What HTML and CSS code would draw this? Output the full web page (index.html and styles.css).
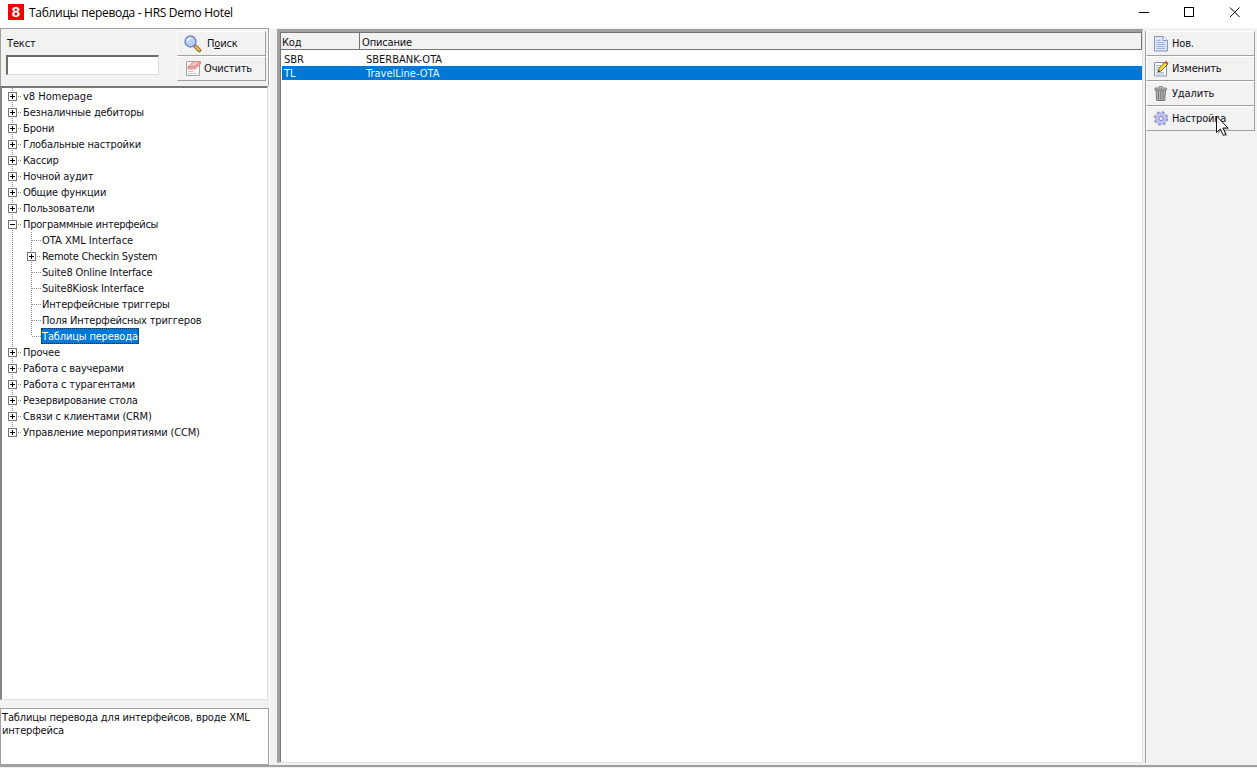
FILE: index.html
```html
<!DOCTYPE html>
<html lang="ru">
<head>
<meta charset="utf-8">
<title>Таблицы перевода - HRS Demo Hotel</title>
<link rel="stylesheet" href="styles.css">
</head>
<body>
<div class="window">
  <header class="titlebar">
    <span class="logo">8</span>
    <span class="title">Таблицы перевода - HRS Demo Hotel</span>
    <svg class="controls" width="112" height="24" viewBox="0 0 112 24" fill="none" stroke="#000" shape-rendering="crispEdges"><path d="M5 12.500h10M50.500 7.500h9v9h-9z"/><path shape-rendering="auto" d="M96 7.500l9.500 9.500M105.500 7.500l-9.500 9.500"/></svg>
  </header>
  <div class="body">
    <aside class="sidebar">
      <section class="search">
        <div class="field"><label for="q">Текст</label><input id="q" type="text"></div>
        <div class="buttons">
          <button class="btn find"><svg width="18" height="18" viewBox="0 0 18 18"><path d="M10.500 10.500l4.800 4.800" stroke="#9a7430" stroke-width="4" stroke-linecap="round"/><path d="M11.500 11.500l3.500 3.500" stroke="#efb84d" stroke-width="2" stroke-linecap="round"/><circle cx="6.500" cy="6.500" r="5.400" fill="#b8d2fa" stroke="#7485c8" stroke-width="1.500"/><path d="M3.500 6.500a3 3 0 0 1 3-3" stroke="#f4faff" stroke-width="1.800" fill="none"/></svg><span>П<u>о</u>иск</span></button>
          <button class="btn clear"><svg width="16" height="17" viewBox="0 0 16 17"><path d="M1.500 1.500h13v14h-13z" fill="#f8f8f8" stroke="#a4a4a4"/><path d="M3 11.500h6M3 13.500h8" stroke="#ccc"/><path d="M3 6.500l5.500-5h7l-5.500 5z" fill="#f8c2c2" stroke="#da8081" stroke-width=".8"/><path d="M3 6.500v2.500h7l5.500-5V1.500L10 6.500z" fill="#eda9aa" stroke="#da8081" stroke-width=".8"/></svg><span>Очистить</span></button>
        </div>
      </section>
      <ul class="tree">
        <li class="node en"><i class="box plus"></i><span>v8 Homepage</span></li>
        <li class="node"><i class="box plus"></i><span>Безналичные дебиторы</span></li>
        <li class="node"><i class="box plus"></i><span>Брони</span></li>
        <li class="node"><i class="box plus"></i><span>Глобальные настройки</span></li>
        <li class="node"><i class="box plus"></i><span>Кассир</span></li>
        <li class="node"><i class="box plus"></i><span>Ночной аудит</span></li>
        <li class="node"><i class="box plus"></i><span>Общие функции</span></li>
        <li class="node"><i class="box plus"></i><span>Пользователи</span></li>
        <li class="node tight"><i class="box"></i><span>Программные интерфейсы</span></li>
        <li class="branch"><ul>
          <li class="node en"><i class="stub"></i><span>OTA XML Interface</span></li>
          <li class="node"><i class="box plus"></i><span class="tight">Remote Checkin System</span></li>
          <li class="node"><i class="stub"></i><span>Suite8 Online Interface</span></li>
          <li class="node"><i class="stub"></i><span>Suite8Kiosk Interface</span></li>
          <li class="node"><i class="stub"></i><span>Интерфейсные триггеры</span></li>
          <li class="node"><i class="stub"></i><span>Поля Интерфейсных триггеров</span></li>
          <li class="node last"><i class="stub"></i><span class="selected">Таблицы перевода</span></li>
        </ul></li>
        <li class="node"><i class="box plus"></i><span>Прочее</span></li>
        <li class="node"><i class="box plus"></i><span>Работа с ваучерами</span></li>
        <li class="node"><i class="box plus"></i><span>Работа с турагентами</span></li>
        <li class="node"><i class="box plus"></i><span>Резервирование стола</span></li>
        <li class="node"><i class="box plus"></i><span>Связи с клиентами (CRM)</span></li>
        <li class="node last"><i class="box plus"></i><span>Управление мероприятиями (CCM)</span></li>
      </ul>
      <p class="hint">Таблицы перевода для интерфейсов, вроде XML<br>интерфейса</p>
    </aside>
    <main class="grid">
      <div class="head"><span>Код</span><span>Описание</span></div>
      <div class="row"><span>SBR</span><span>SBERBANK-OTA</span></div>
      <div class="row active"><span>TL</span><span>TravelLine-OTA</span></div>
    </main>
    <nav class="actions">
      <button class="btn"><svg width="16" height="17" viewBox="0 0 16 17"><path d="M1.500 1.500h8.500l4.500 4v10.500h-13z" fill="#dce8fa" stroke="#8496c0"/><path d="M10 1.500v4h4.500" fill="#f4f8ff" stroke="#8496c0"/><path d="M3.500 5.500h4M3.500 7.500h8M3.500 9.500h9M3.500 11.500h9M3.500 13.500h9" stroke="#a3b5d8"/></svg><span>Нов.</span></button>
      <button class="btn"><svg width="16" height="17" viewBox="0 0 16 17"><path d="M1.500 2.500h12v13.500h-12z" fill="#f5f8fd" stroke="#8794ad"/><path d="M3 5.500h6M3 7.500h5M3 9.500h3M3 12.500h8M3 14h8" stroke="#b4bfd2"/><path d="M5 12l1-3.500L12 2l2.500 2.500-6.500 6.500z" fill="#f5dc3c" stroke="#6b5a1c" stroke-width=".9"/><path d="M11.500 2.500L13 .8l2.500 2.400-1.500 1.800z" fill="#d8463c"/><path d="M5 12l.6-2 1.600 1.300z" fill="#222"/></svg><span>Изменить</span></button>
      <button class="btn"><svg width="16" height="17" viewBox="0 0 16 17"><path d="M3 5h9.500l-.7 10.500H3.700z" fill="#b5b5b5" stroke="#777"/><path d="M5.500 6v8.500M7.750 6v8.500M10 6v8.500" stroke="#777"/><path d="M2 3h11.500v2H2z" fill="#bbb" stroke="#777" stroke-width=".8"/><path d="M6 3V1.500h3.500V3" fill="none" stroke="#888"/></svg><span>Удалить</span></button>
      <button class="btn"><svg width="16" height="17" viewBox="0 0 16 17"><circle cx="8" cy="8.500" r="6" fill="none" stroke="#8f93cc" stroke-width="2.400" stroke-dasharray="2.600 2.110"/><circle cx="8" cy="8.500" r="4" fill="none" stroke="#c0c4f2" stroke-width="3.400"/><circle cx="8" cy="8.500" r="5.500" fill="none" stroke="#a0a4dc" stroke-width=".8"/><circle cx="8" cy="8.500" r="2.100" fill="#f4f4fb" stroke="#777bb9"/></svg><span>Настройка</span></button>
    </nav>
  </div>
  <footer class="status"></footer>
  <svg class="cursor" width="16" height="24" viewBox="0 0 16 24"><path d="M3 3v16l4-3.500 3 6 2.500-1-2.600-6H15z" fill="#777" opacity=".5"/><path d="M1.500 1v16.500l3.800-3.600 3 6.500 2.500-1.100-2.900-6.300H13z" fill="#fff" stroke="#111"/></svg>
</div>
</body>
</html>
```
FILE: styles.css
```css
* { box-sizing: border-box; }
body { margin: 0; background: #fff; overflow: hidden; }
ul, p { margin: 0; padding: 0; list-style: none; }
.window {
  position: relative;
  display: flex;
  flex-direction: column;
  width: 1257px;
  height: 768px;
  color: #101018;
  font: 11px/16px "DejaVu Sans Condensed", "DejaVu Sans", sans-serif;
  font-stretch: condensed;
  letter-spacing: -0.16px;
}
.titlebar { display: flex; align-items: center; height: 28px; padding: 0 8px 4px; flex: none; background: #fffffe; }
.logo { width: 16px; height: 16px; margin-right: 5px; background: #ed0505; color: #fff; font: bold 15px/16px "Liberation Sans", sans-serif; text-align: center; letter-spacing: 0; }
.title { font: 12px/16px "Open Sans", "Noto Sans", sans-serif; letter-spacing: -0.3px; color: #000; padding-top: 2px; }
.controls { margin-left: auto; margin-right: 3px; }
.body { display: flex; height: 737px; flex: none; background: #f2f2f1; }
.sidebar { display: flex; flex-direction: column; width: 270px; flex: none; border-right: 1px solid #fff; }
.search { display: flex; justify-content: space-between; height: 58px; width: 269px; border: solid #a0a0a0; border-width: 1px 1px 0; padding: 2px 2px 0 5px; }
.field { display: flex; flex-direction: column; width: 153px; }
.field label { height: 24px; padding: 5px 1px 0; }
.field input { height: 20px; width: 153px; background: #fff; border: solid; border-width: 2px 1px 1px 2px; border-color: #6b6b6b #dedede #dedede #6b6b6b; outline: 0; }
.btn { display: flex; align-items: center; height: 25px; width: 100%; padding: 0 0 0 6px; border: solid; border-width: 1px; border-color: #fff #a0a0a0 #a0a0a0 #fff; background: #f2f2f1; color: inherit; font: inherit; letter-spacing: inherit; }
.btn svg { flex: none; }
.buttons { width: 89px; }
.btn.clear { padding-left: 7px; }
.find span { margin-left: 5px; }
.clear span { margin-left: 3px; }
.tree { height: 614px; width: 268px; flex: none; background: #fffffe; border: solid; border-width: 2px 1px 1px 2px; border-color: #777 #e0e0e0 #e0e0e0 #858585; padding-left: 5px; }
.node { display: flex; align-items: center; height: 16px; background: repeating-linear-gradient(#909090 0 1px, transparent 1px 2px) 5px 0 / 1px 100% no-repeat; }
.node.last { background-size: 1px 8px; }
.node span { white-space: pre; padding: 0 1px; height: 16px; line-height: 17px; }
.en { letter-spacing: 0; }
.tight { letter-spacing: -0.27px; }
.box { position: relative; flex: none; width: 9px; height: 9px; margin: 1px 5px 0 1px; border: 1px solid #777; background: linear-gradient(#000, #000) center / 5px 1px no-repeat #fff; }
.box::after { content: ""; position: absolute; left: 9px; top: 3px; width: 3px; height: 1px; background: repeating-linear-gradient(90deg, #909090 0 1px, transparent 1px 2px); }
.plus { background: linear-gradient(#000, #000) center / 5px 1px no-repeat, linear-gradient(#000, #000) center / 1px 5px no-repeat, #fff; }
.stub { flex: none; height: 1px; width: 9px; margin: 1px 0 0 6px; background: repeating-linear-gradient(90deg, #909090 0 1px, transparent 1px 2px); }
.branch { padding-left: 19px; background: repeating-linear-gradient(#909090 0 1px, transparent 1px 2px) 5px 0 / 1px 100% no-repeat; }
.selected { background: #0078d7; color: #fff; outline: 1px dotted #20242b; outline-offset: -1px; }
.hint { height: 57px; width: 269px; margin-top: 8px; background: #fffffe; border: 1px solid #a0a0a0; padding: 2px 1px; line-height: 13px; white-space: nowrap; }
.grid { width: 866px; margin: 1px 0 2px 7px; background: #fffffe; border: solid; border-width: 3px 1px 1px 3px; border-color: #a0a0a0 #e0e0e0 #e0e0e0 #a0a0a0; padding-left: 1px; box-shadow: inset 1px 1px #777; flex: none; }
.head { display: flex; width: 861px; height: 18px; padding-top: 1px; background: #f2f2f1; border: solid #747474; border-width: 1px 1px 1px 0; line-height: 17px; }
.head span { padding-left: 2px; }
.head span:first-child { padding-left: 1px; width: 79px; border-right: 1px solid #747474; margin-top: -1px; padding-top: 1px; }
.row { display: flex; height: 14px; line-height: 15px; width: 860px; margin-left: 1px; padding-left: 2px; letter-spacing: 0; }
.head + .row { margin-top: 2px; }
.row span:first-child { width: 82px; }
.active { background: #0078d7; color: #e8fbff; }
.actions { width: 110px; flex: none; margin: 3px 0 2px 2px; border-left: 1px solid #a0a0a0; }
.actions .btn svg { margin-right: 3px; }
.status { height: 3px; background: linear-gradient(#a0a0a0 0 2px, #f2f2f1 2px); }
.cursor { position: absolute; left: 1215px; top: 115px; }
```
